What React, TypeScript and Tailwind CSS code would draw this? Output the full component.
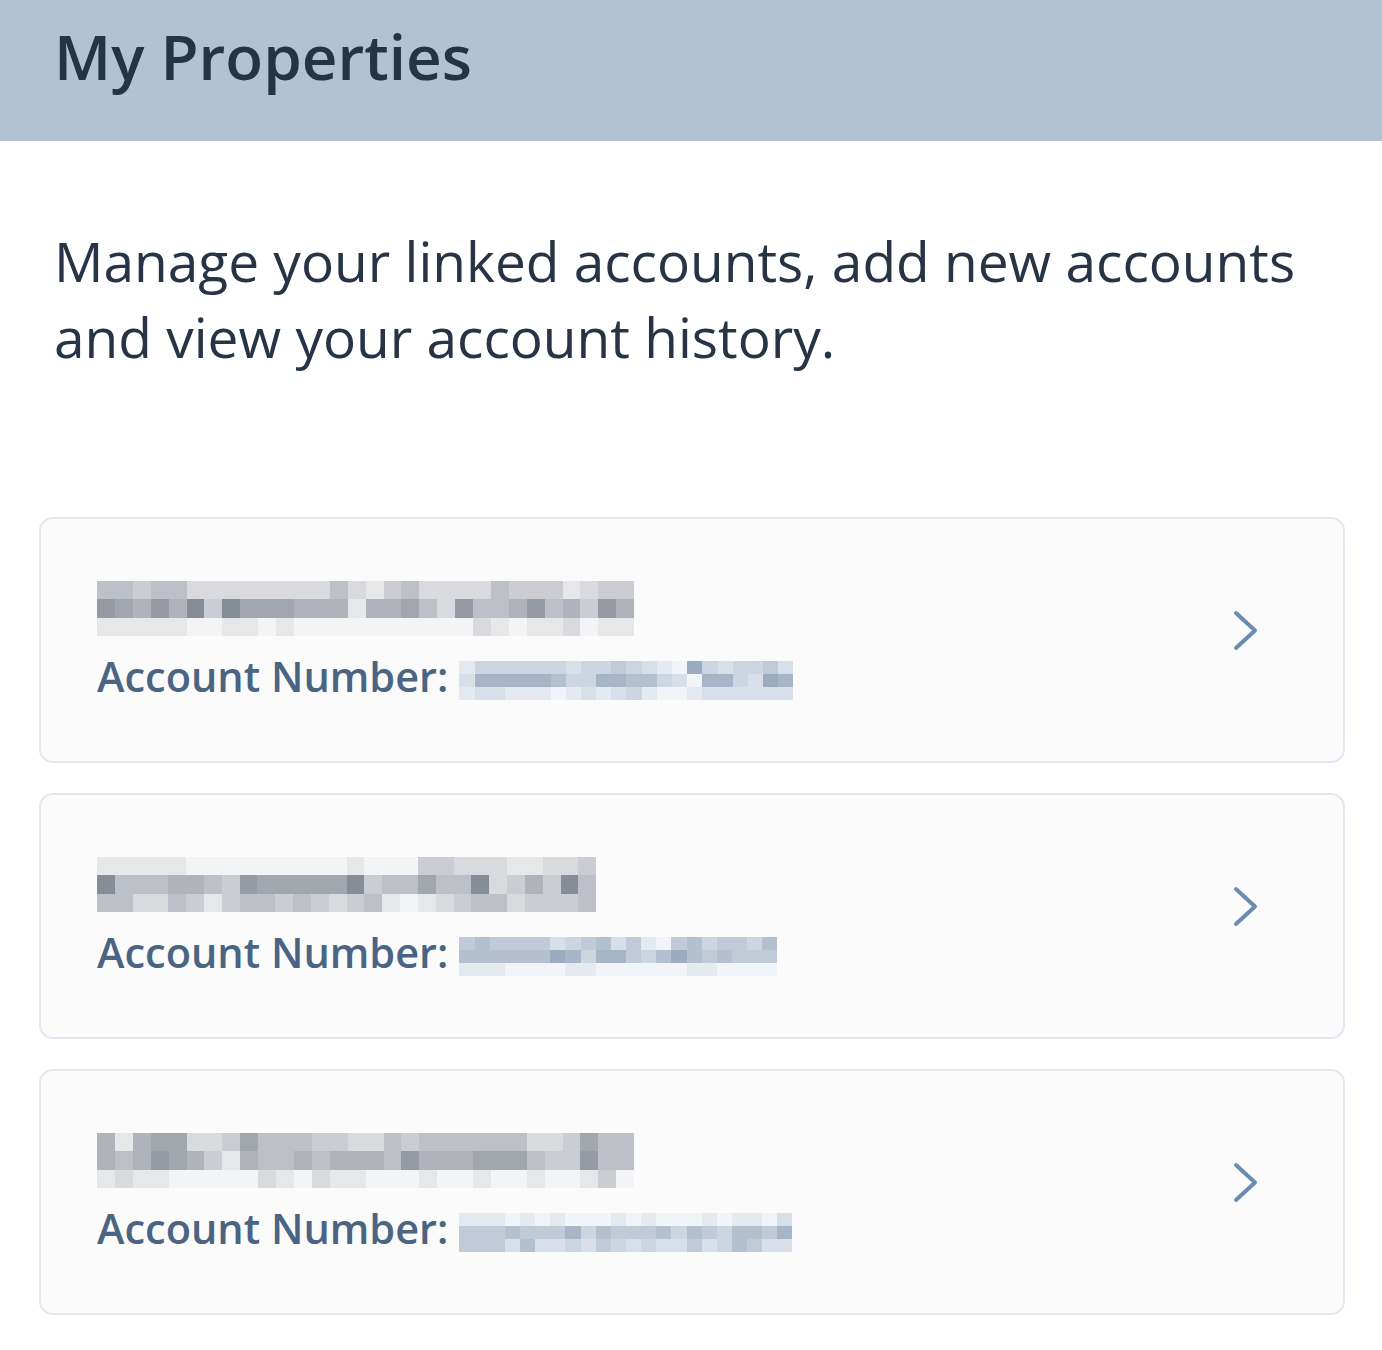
const grey = { light: [243, 244, 245], dark: [122, 128, 139] };
const blue = { light: [241, 244, 248], dark: [130, 150, 176] };

type Palette = typeof grey;

const shade = (p: Palette, d: number) => {
  const t = d / 9;
  const c = p.light.map((l, i) => Math.round(l + (p.dark[i] - l) * t));
  return `rgb(${c[0]}, ${c[1]}, ${c[2]})`;
};

// blurred-out placeholder, drawn as a mosaic of grey cells
const Mosaic = ({ rows, palette, className }: { rows: string[]; palette: Palette; className: string }) => (
  <span className={`flex flex-col overflow-hidden blur-[0.6px] ${className}`}>
    {rows.map((row, r) => (
      <span key={r} className="flex flex-1">
        {row.split("").map((d, c) => (
          <span key={c} className="flex-1" style={{ backgroundColor: shade(palette, Number(d)) }} />
        ))}
      </span>
    ))}
  </span>
);

const accounts = [
  {
    name: ["443442222222242134222243331233", "765758386665551556427445745375", "111110011010000000000210112011"],
    nameW: "w-[537px]",
    number: ["1333333233432107323342", "2666665336655320663276", "1221110121231001222222"],
    numberW: "w-[334px]",
  },
  {
    name: ["1111100000000010003322211223", "8444554376666683446448235384", "4422431344343234101234423334"],
    nameW: "w-[499px]",
    number: ["454444234524104534435", "555555763664357545444", "111000011000000110000"],
    numberW: "w-[318px]",
  },
  {
    name: ["515662236444332243444444223644", "545765315445455547555666433744", "121100000210211000100100100130"],
    nameW: "w-[537px]",
    number: ["1110101000101000101102", "4445444635444535435546", "4442522324323224235422"],
    numberW: "w-[333px]",
  },
];

const Chevron = () => (
  <svg width="27" height="43" viewBox="0 0 27 43" fill="none" className="mb-[20px] shrink-0">
    <path d="M4 4 L23 21.5 L4 39" stroke="#6b8bb2" strokeWidth="4" strokeLinecap="round" strokeLinejoin="round" />
  </svg>
);

export default function App() {
  return (
    <div className="min-h-[1350px] w-[1382px] bg-white font-['Open_Sans',sans-serif]">
      <header className="h-[141px] bg-[#b2c2d5] px-[54px] pt-[23px]">
        <h1 className="text-[62px] font-semibold leading-[66px] text-[#243345]">My Properties</h1>
      </header>

      <main className="pl-[39px] pr-[37px]">
        <p className="mt-[82px] px-[15px] text-[55px] leading-[76px] text-[#263445]">
          Manage your linked accounts, add new accounts and view your account history.
        </p>

        <ul className="mt-[142px] flex flex-col gap-[30px]">
          {accounts.map((a, i) => (
            <li
              key={i}
              className="flex h-[246px] items-center justify-between rounded-[14px] border-2 border-[#e1e7ef] bg-[#fbfbfc] pl-[56px] pr-[84px]"
            >
              <div className="flex flex-col pt-[6px]">
                <Mosaic rows={a.name} palette={grey} className={`${a.nameW} h-[55px]`} />
                <div className="mt-[11px] flex items-center text-[41.5px] font-semibold leading-[58px] text-[#4a6482]">
                  <span>Account Number:</span>
                  <Mosaic rows={a.number} palette={blue} className={`${a.numberW} ml-[11px] mt-[9px] h-[40px]`} />
                </div>
              </div>
              <Chevron />
            </li>
          ))}
        </ul>
      </main>
    </div>
  );
}
